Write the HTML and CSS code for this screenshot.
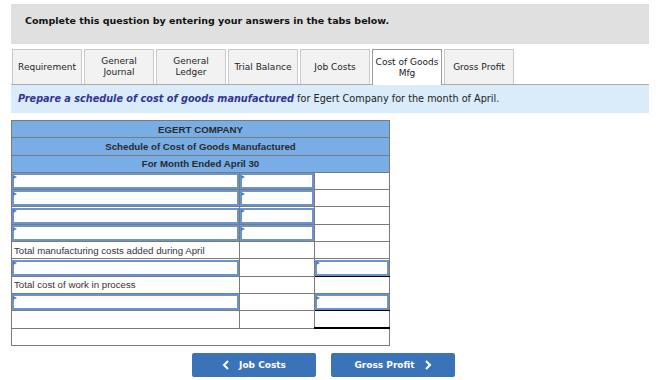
FILE: index.html
```html
<!DOCTYPE html>
<html lang="en">
<head>
  <meta charset="UTF-8">
  <title>Cost of Goods Manufactured</title>
  <link rel="stylesheet" href="styles.css">
</head>
<body>
  <div class="question">
    <div class="prompt">Complete this question by entering your answers in the tabs below.</div>

    <div class="tabs">
      <div class="tab">Requirement</div>
      <div class="tab">General<br>Journal</div>
      <div class="tab">General<br>Ledger</div>
      <div class="tab">Trial Balance</div>
      <div class="tab">Job Costs</div>
      <div class="tab active">Cost of Goods<br>Mfg</div>
      <div class="tab">Gross Profit</div>
    </div>

    <div class="instructions">
      <em>Prepare a schedule of cost of goods manufactured</em> for Egert Company for the month of April.
    </div>

    <table class="schedule">
      <colgroup>
        <col class="col-label">
        <col class="col-amount">
        <col class="col-amount">
      </colgroup>
      <tr class="head"><th colspan="3">EGERT COMPANY</th></tr>
      <tr class="head"><th colspan="3">Schedule of Cost of Goods Manufactured</th></tr>
      <tr class="head"><th colspan="3">For Month Ended April 30</th></tr>

      <tr><td class="entry"><input></td><td class="entry"><input></td><td></td></tr>
      <tr><td class="entry"><input></td><td class="entry"><input></td><td></td></tr>
      <tr><td class="entry"><input></td><td class="entry"><input></td><td></td></tr>
      <tr><td class="entry"><input></td><td class="entry"><input></td><td></td></tr>
      <tr><td class="label">Total manufacturing costs added during April</td><td></td><td></td></tr>
      <tr><td class="entry"><input></td><td></td><td class="entry underline"><input></td></tr>
      <tr><td class="label">Total cost of work in process</td><td></td><td></td></tr>
      <tr><td class="entry"><input></td><td></td><td class="entry underline"><input></td></tr>
      <tr><td></td><td></td><td class="double"></td></tr>
      <tr><td colspan="3"></td></tr>
    </table>

    <div class="nav">
      <button class="nav-btn">
        <svg width="8" height="10" viewBox="0 0 8 10"><path d="M6 1 L2 5 L6 9" fill="none" stroke="#fff" stroke-width="2"/></svg>
        Job Costs
      </button>
      <button class="nav-btn">
        Gross Profit
        <svg width="8" height="10" viewBox="0 0 8 10"><path d="M2 1 L6 5 L2 9" fill="none" stroke="#fff" stroke-width="2"/></svg>
      </button>
    </div>
  </div>
</body>
</html>
```

FILE: styles.css
```css
* {
  box-sizing: border-box;
}

body {
  margin: 0;
  background: #fff;
  font-family: 'DejaVu Sans', Verdana, sans-serif;
  color: #222;
}

.question {
  width: 638px;
  margin: 4px 0 0 11px;
}

.prompt {
  height: 40px;
  padding: 11px 14px 0;
  line-height: 12px;
  background: #e0e0e0;
  font-size: 9.5px;
  font-weight: bold;
  color: #111;
}

.tabs {
  display: flex;
  gap: 2px;
  margin-top: 5px;
  padding-left: 1px;
  border-bottom: 1px solid #a9a9a9;
}

.tab {
  width: 70px;
  height: 35px;
  display: flex;
  align-items: center;
  justify-content: center;
  text-align: center;
  line-height: 11px;
  font-size: 9px;
  color: #222;
  background: #f2f2f2;
  border: 1px solid #c9c9c9;
  border-bottom: none;
}

.tab.active {
  background: #fff;
  border-color: #9a9a9a;
  margin-bottom: -1px;
  height: 36px;
}

.instructions {
  height: 28px;
  padding: 8px 7px 0;
  line-height: 12px;
  background: #daebf9;
  font-size: 9.7px;
  color: #222;
}

.instructions em {
  font-weight: bold;
  color: #333399;
}

.schedule {
  margin-top: 7px;
  width: 379px;
  border-collapse: collapse;
  table-layout: fixed;
  font-family: 'Liberation Sans', Arial, sans-serif;
  font-size: 9.7px;
  color: #333;
}

.col-label {
  width: 228px;
}

.col-amount {
  width: 75px;
}

.schedule tr {
  height: 17.3px;
}

.schedule th,
.schedule td {
  border: 1px solid #7a7a7a;
  padding: 0;
}

.schedule th {
  background: #78ade6;
  font-weight: bold;
  text-align: center;
  color: #2a2a2a;
}

.schedule td.label {
  padding-left: 2px;
}

.schedule td.entry {
  position: relative;
}

.schedule td.entry::before {
  content: '';
  position: absolute;
  left: 1px;
  top: 2px;
  border-left: 4px solid #4a7fc1;
  border-top: 2.5px solid transparent;
  border-bottom: 2.5px solid transparent;
}

.schedule input {
  display: block;
  width: 100%;
  height: 16px;
  margin: 0;
  border: 2px solid #6b94c9;
  background: #fff;
  outline: none;
}

.schedule td.underline {
  border-bottom: 1px solid #000;
}

.schedule td.double {
  border-bottom: 2px solid #000;
}

.nav {
  display: flex;
  gap: 15px;
  margin: 7px 0 0 181px;
}

.nav-btn {
  width: 124px;
  height: 24px;
  display: flex;
  align-items: center;
  justify-content: center;
  gap: 9px;
  background: #3b73b8;
  color: #fff;
  border: none;
  border-radius: 2px;
  font-family: 'DejaVu Sans', Verdana, sans-serif;
  font-size: 9px;
  font-weight: bold;
}
```
